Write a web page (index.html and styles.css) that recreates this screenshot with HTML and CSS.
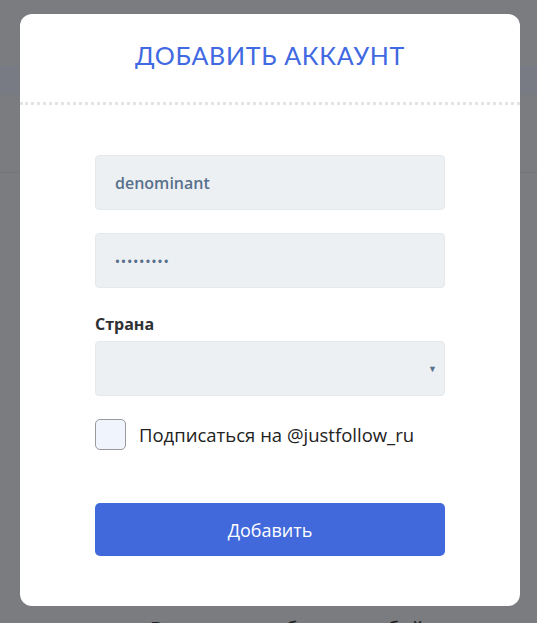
FILE: index.html
```html
<!DOCTYPE html>
<html lang="ru">

<head>
    <meta charset="UTF-8" />
    <meta name="viewport" content="width=device-width, initial-scale=1.0" />
    <title>Добавить аккаунт</title>
    <link rel="stylesheet" href="styles.css">
</head>

<body>
    <div class="page">
        <div class="page-top"></div>
        <div class="page-band"></div>
        <div class="page-row"></div>
        <div class="page-text">Вы можете добавить любой аккаунт, который</div>
    </div>

    <div class="modal">
        <div class="modal-header">
            <h2>Добавить аккаунт</h2>
        </div>

        <form class="modal-body">
            <input class="field" type="text" value="denominant">
            <input class="field field-pass" type="password" value="123456789">

            <label class="field-label">Страна</label>
            <div class="select-wrap">
                <select class="field">
                    <option></option>
                </select>
                <span class="select-arrow">&#9660;</span>
            </div>

            <label class="check">
                <span class="check-box"></span>
                Подписаться на @justfollow_ru
            </label>

            <button type="button" class="btn">Добавить</button>
        </form>
    </div>
</body>

</html>
```

FILE: styles.css
```css
body {
    margin: 0;
    padding: 0;
    background-color: #7b7c80;
    font-family: 'Open Sans', 'Lato', sans-serif;
    color: #333;
    overflow: hidden;
}

.page {
    height: 623px;
    overflow: hidden;
}

.page-top {
    height: 66px;
}

.page-band {
    height: 29px;
    background-color: #787b84;
}

.page-row {
    height: 77px;
    border-bottom: 1px solid #747579;
}

.page-text {
    margin-top: 444px;
    padding-left: 150px;
    font-size: 20px;
    line-height: 24px;
    color: #1e1f22;
}

.modal {
    position: fixed;
    top: 14px;
    left: 20px;
    width: 500px;
    background-color: #ffffff;
    border-radius: 12px;
}

.modal-header {
    height: 88px;
    border-bottom: 3px dotted #e4e4e4;
    display: flex;
    align-items: center;
    justify-content: center;
}

.modal-header h2 {
    margin: 0 0 6px;
    font-family: 'Lato', sans-serif;
    font-size: 25px;
    font-weight: 400;
    color: #4169e1;
    text-transform: uppercase;
    letter-spacing: 0.7px;
}

.modal-body {
    padding: 50px 75px 50px;
    display: flex;
    flex-direction: column;
}

.field {
    box-sizing: border-box;
    width: 350px;
    height: 55px;
    margin: 0;
    padding: 0 19px;
    border: 1px solid #e6e9ec;
    border-radius: 4px;
    background-color: #edf0f3;
    font-family: 'Open Sans', sans-serif;
    font-size: 16px;
    font-weight: 600;
    color: #58708c;
    outline: none;
    appearance: none;
    -webkit-appearance: none;
}

.field-pass {
    margin-top: 23px;
    font-size: 13px;
    letter-spacing: 1.2px;
}

.field-label {
    margin-top: 25px;
    height: 28px;
    font-size: 16px;
    font-weight: 700;
    color: #2f3033;
}

.select-wrap {
    position: relative;
}

.select-arrow {
    position: absolute;
    right: 8px;
    top: 21px;
    font-size: 9px;
    color: #58708c;
}

.check {
    margin-top: 23px;
    display: flex;
    align-items: center;
    gap: 13px;
    font-size: 18.5px;
    color: #222;
}

.check-box {
    box-sizing: border-box;
    width: 31px;
    height: 31px;
    border: 1px solid #9a9a9a;
    border-radius: 5px;
    background-color: #f0f4fd;
}

.btn {
    margin-top: 53px;
    height: 53px;
    border: none;
    border-radius: 5px;
    background-color: #4169db;
    color: #ffffff;
    font-family: 'Open Sans', sans-serif;
    font-size: 18px;
}
```
